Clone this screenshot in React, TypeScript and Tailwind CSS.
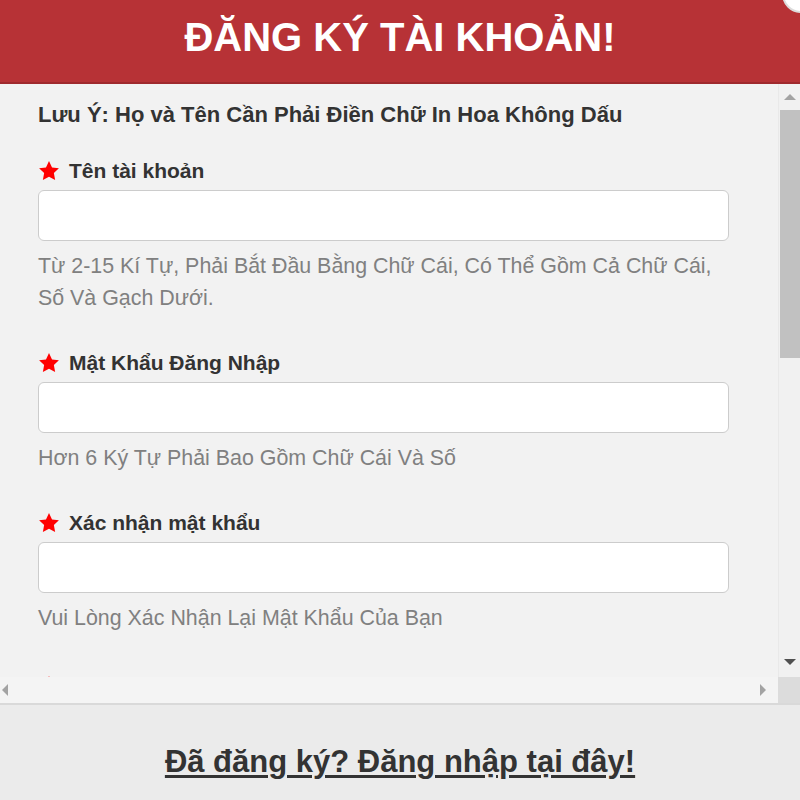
import React from "react";

const fields = [
  {
    label: "Tên tài khoản",
    hint: "Từ 2-15 Kí Tự, Phải Bắt Đầu Bằng Chữ Cái, Có Thể Gồm Cả Chữ Cái, Số Và Gạch Dưới.",
  },
  { label: "Mật Khẩu Đăng Nhập", hint: "Hơn 6 Ký Tự Phải Bao Gồm Chữ Cái Và Số" },
  { label: "Xác nhận mật khẩu", hint: "Vui Lòng Xác Nhận Lại Mật Khẩu Của Bạn" },
];

const Star = () => (
  <svg viewBox="0 0 24 24" className="w-[22px] h-[22px] shrink-0" fill="#ff0000">
    <path d="M12 1.2l3.3 6.9 7.5 1-5.5 5.2 1.4 7.5L12 18.2l-6.7 3.6 1.4-7.5L1.2 9.1l7.5-1z" />
  </svg>
);

const Field = ({ label, hint, first }: { label: string; hint: string; first?: boolean }) => (
  <div className={first ? "mt-[26px]" : "mt-[34px]"}>
    <div className="flex items-center gap-[9px] h-[30px] text-[21px] font-bold text-[#333]">
      <Star />
      <span>{label}</span>
    </div>
    <input
      type="text"
      className="mt-[4px] block w-full h-[51px] bg-white border border-[#cccccc] rounded-[6px] outline-none"
    />
    <p className="mt-[9px] text-[21.4px] leading-[32px] text-[#808080] mr-[-6px]">{hint}</p>
  </div>
);

export default function App() {
  return (
    <div
      className="relative w-[800px] h-[800px] overflow-hidden flex flex-col bg-[#f2f2f2]"
      style={{ fontFamily: '"Liberation Sans", Arial, sans-serif' }}
    >
      {/* header */}
      <div className="h-[84px] shrink-0 bg-[#b73236] border-b-2 border-[#9f2a2e] flex items-center justify-center">
        <h1 className="text-[40px] font-bold text-white -mt-[8px]">ĐĂNG KÝ TÀI KHOẢN!</h1>
      </div>
      <div className="absolute left-[782px] top-[-25px] w-[38px] h-[38px] rounded-full bg-white border-2 border-[#dddddd]" />

      {/* scroll box */}
      <div className="h-[619px] shrink-0 flex flex-col">
        <div className="flex h-[593px]">
          <div className="flex-1 overflow-hidden pl-[38px] pr-[49px] pt-[16px]">
            <p className="h-[30px] leading-[30px] text-[22px] font-bold text-[#333]">
              Lưu Ý: Họ và Tên Cần Phải Điền Chữ In Hoa Không Dấu
            </p>
            {fields.map((f, i) => (
              <Field key={f.label} label={f.label} hint={f.hint} first={i === 0} />
            ))}
            {/* next field, cut off by the scroll box */}
            <div className="mt-[41px] flex">
              <Star />
            </div>
          </div>
          {/* vertical scrollbar */}
          <div className="w-[22px] shrink-0 flex flex-col items-stretch bg-[#f1f1f1] border-l border-[#e9e9e9]">
            <div className="h-[26px] flex items-center justify-center">
              <div className="w-0 h-0 border-l-[6px] border-r-[6px] border-b-[6px] border-l-transparent border-r-transparent border-b-[#a3a3a3]" />
            </div>
            <div className="h-[248px] ml-[1px] bg-[#c1c1c1]" />
            <div className="flex-1" />
            <div className="h-[30px] flex items-center justify-center">
              <div className="w-0 h-0 border-l-[6px] border-r-[6px] border-t-[6px] border-l-transparent border-r-transparent border-t-[#505050]" />
            </div>
          </div>
        </div>
        {/* horizontal scrollbar */}
        <div className="h-[26px] flex bg-[#f4f4f4]">
          <div className="flex-1 flex items-center justify-between pl-[2px] pr-[12px]">
            <div className="w-0 h-0 border-t-[6px] border-b-[6px] border-r-[6px] border-t-transparent border-b-transparent border-r-[#a3a3a3]" />
            <div className="w-0 h-0 border-t-[6px] border-b-[6px] border-l-[6px] border-t-transparent border-b-transparent border-l-[#a3a3a3]" />
          </div>
          <div className="w-[22px] bg-[#dcdcdc]" />
        </div>
      </div>

      {/* footer */}
      <div className="flex-1 bg-[#ebebeb] border-t-2 border-[#d9d9d9] flex items-center justify-center">
        <a href="#" className="text-[31px] font-bold text-[#333] underline underline-offset-[3px] mt-[20px]">
          Đã đăng ký? Đăng nhập tại đây!
        </a>
      </div>
    </div>
  );
}
